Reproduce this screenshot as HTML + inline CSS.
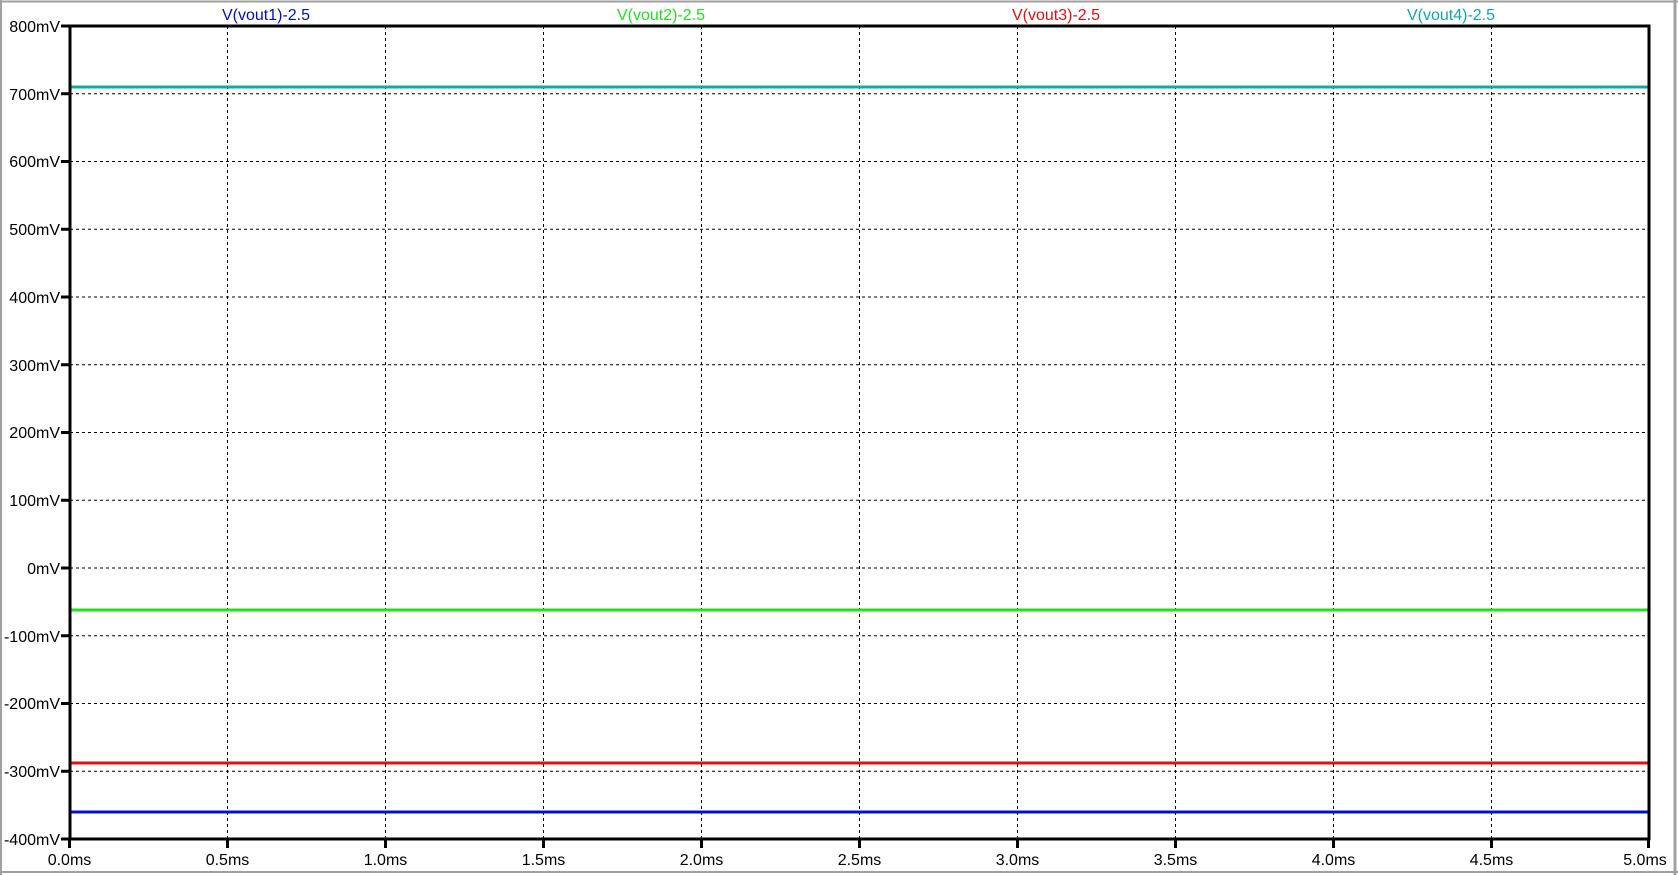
<!DOCTYPE html>
<html><head><style>
html,body{margin:0;padding:0;background:#fff;width:1678px;height:875px;overflow:hidden}
svg{display:block}
text{font-family:"Liberation Sans",sans-serif;font-size:16px}
</style></head><body>
<svg width="1678" height="875" viewBox="0 0 1678 875">
<rect x="0" y="0" width="1678" height="875" fill="#fff"/>
<line x1="0" y1="1.5" x2="1678" y2="1.5" stroke="#a0a0a0" stroke-width="2"/>
<line x1="1" y1="0" x2="1" y2="875" stroke="#a0a0a0" stroke-width="2"/>
<line x1="1675" y1="0" x2="1675" y2="875" stroke="#a0a0a0" stroke-width="3"/>
<line x1="0" y1="872" x2="1678" y2="872" stroke="#a0a0a0" stroke-width="2"/>
<g stroke="#000" stroke-width="1" stroke-dasharray="3,3">
<line x1="70" y1="93.75" x2="1649" y2="93.75"/>
<line x1="70" y1="161.5" x2="1649" y2="161.5"/>
<line x1="70" y1="229.25" x2="1649" y2="229.25"/>
<line x1="70" y1="297" x2="1649" y2="297"/>
<line x1="70" y1="364.75" x2="1649" y2="364.75"/>
<line x1="70" y1="432.5" x2="1649" y2="432.5"/>
<line x1="70" y1="500.25" x2="1649" y2="500.25"/>
<line x1="70" y1="568" x2="1649" y2="568"/>
<line x1="70" y1="635.75" x2="1649" y2="635.75"/>
<line x1="70" y1="703.5" x2="1649" y2="703.5"/>
<line x1="70" y1="771.25" x2="1649" y2="771.25"/>
<line x1="227.5" y1="26" x2="227.5" y2="839"/>
<line x1="385.5" y1="26" x2="385.5" y2="839"/>
<line x1="543.5" y1="26" x2="543.5" y2="839"/>
<line x1="701.5" y1="26" x2="701.5" y2="839"/>
<line x1="859.5" y1="26" x2="859.5" y2="839"/>
<line x1="1017.5" y1="26" x2="1017.5" y2="839"/>
<line x1="1175.5" y1="26" x2="1175.5" y2="839"/>
<line x1="1333.5" y1="26" x2="1333.5" y2="839"/>
<line x1="1491.5" y1="26" x2="1491.5" y2="839"/>
</g>
<line x1="70" y1="87" x2="1649" y2="87" stroke="#10a8a8" stroke-width="3"/>
<line x1="70" y1="610" x2="1649" y2="610" stroke="#20e020" stroke-width="3"/>
<line x1="70" y1="763" x2="1649" y2="763" stroke="#e01010" stroke-width="3"/>
<line x1="70" y1="812" x2="1649" y2="812" stroke="#0010d0" stroke-width="3"/>
<rect x="70" y="26" width="1579" height="813" fill="none" stroke="#000" stroke-width="3"/>
<g stroke="#000" stroke-width="3">
<line x1="61" y1="26" x2="70" y2="26"/><line x1="61" y1="93.75" x2="70" y2="93.75"/>
<line x1="61" y1="161.5" x2="70" y2="161.5"/><line x1="61" y1="229.25" x2="70" y2="229.25"/>
<line x1="61" y1="297" x2="70" y2="297"/><line x1="61" y1="364.75" x2="70" y2="364.75"/>
<line x1="61" y1="432.5" x2="70" y2="432.5"/><line x1="61" y1="500.25" x2="70" y2="500.25"/>
<line x1="61" y1="568" x2="70" y2="568"/><line x1="61" y1="635.75" x2="70" y2="635.75"/>
<line x1="61" y1="703.5" x2="70" y2="703.5"/><line x1="61" y1="771.25" x2="70" y2="771.25"/>
<line x1="61" y1="839" x2="70" y2="839"/>
<line x1="69.5" y1="839" x2="69.5" y2="848"/><line x1="227.5" y1="839" x2="227.5" y2="848"/>
<line x1="385.5" y1="839" x2="385.5" y2="848"/><line x1="543.5" y1="839" x2="543.5" y2="848"/>
<line x1="701.5" y1="839" x2="701.5" y2="848"/><line x1="859.5" y1="839" x2="859.5" y2="848"/>
<line x1="1017.5" y1="839" x2="1017.5" y2="848"/><line x1="1175.5" y1="839" x2="1175.5" y2="848"/>
<line x1="1333.5" y1="839" x2="1333.5" y2="848"/><line x1="1491.5" y1="839" x2="1491.5" y2="848"/>
<line x1="1648.5" y1="839" x2="1648.5" y2="848"/>
</g>
<g text-anchor="end" fill="#000">
<text x="60" y="32">800mV</text><text x="60" y="100">700mV</text>
<text x="60" y="167">600mV</text><text x="60" y="235">500mV</text>
<text x="60" y="303">400mV</text><text x="60" y="371">300mV</text>
<text x="60" y="438">200mV</text><text x="60" y="506">100mV</text>
<text x="60" y="574">0mV</text><text x="60" y="642">-100mV</text>
<text x="60" y="709">-200mV</text><text x="60" y="777">-300mV</text>
<text x="60" y="845">-400mV</text>
</g>
<g text-anchor="middle" fill="#000">
<text x="69.5" y="865">0.0ms</text><text x="227.5" y="865">0.5ms</text>
<text x="385.5" y="865">1.0ms</text><text x="543.5" y="865">1.5ms</text>
<text x="701.5" y="865">2.0ms</text><text x="859.5" y="865">2.5ms</text>
<text x="1017.5" y="865">3.0ms</text><text x="1175.5" y="865">3.5ms</text>
<text x="1333.5" y="865">4.0ms</text><text x="1491.5" y="865">4.5ms</text>
<text x="1645" y="865">5.0ms</text>
</g>
<g text-anchor="middle">
<text x="266" y="20" fill="#0010c0">V(vout1)-2.5</text>
<text x="661" y="20" fill="#20e020">V(vout2)-2.5</text>
<text x="1056" y="20" fill="#e01010">V(vout3)-2.5</text>
<text x="1451" y="20" fill="#10a8a8">V(vout4)-2.5</text>
</g>
</svg>
</body></html>
